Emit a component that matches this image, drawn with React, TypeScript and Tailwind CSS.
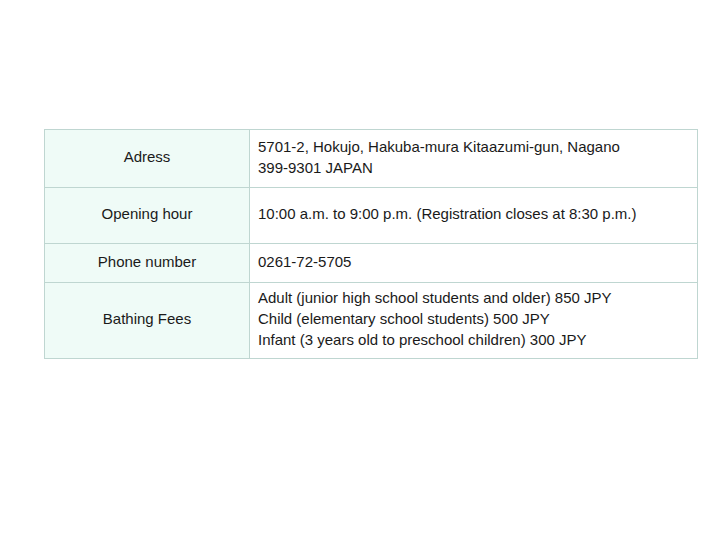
const rows = [
  {
    label: 'Adress',
    lines: ['5701-2, Hokujo, Hakuba-mura Kitaazumi-gun, Nagano', '399-9301 JAPAN'],
    h: 'h-[58px]',
  },
  {
    label: 'Opening hour',
    lines: ['10:00 a.m. to 9:00 p.m. (Registration closes at 8:30 p.m.)'],
    h: 'h-[56px]',
  },
  { label: 'Phone number', lines: ['0261-72-5705'], h: 'h-[39px]' },
  {
    label: 'Bathing Fees',
    lines: [
      'Adult (junior high school students and older) 850 JPY',
      'Child (elementary school students) 500 JPY',
      'Infant (3 years old to preschool children) 300 JPY',
    ],
    h: 'h-[76px]',
  },
];

export default function App() {
  return (
    <div className="w-[720px] h-[540px] bg-white font-['Liberation_Sans',Arial,sans-serif] text-[15px] leading-[21px] text-[#1a1a1a]">
      <div className="pt-[129px] pl-[44px]">
        <table className="w-[654px] border-collapse">
          <tbody>
            {rows.map((r) => (
              <tr key={r.label} className={r.h}>
                <td className="w-[205px] border border-[#bfd6d1] bg-[#effbf7] pb-[4px] text-center align-middle">
                  {r.label}
                </td>
                <td className="border border-[#bfd6d1] px-[8px] pb-[4px] align-middle">
                  {r.lines.map((l) => (
                    <div key={l}>{l}</div>
                  ))}
                </td>
              </tr>
            ))}
          </tbody>
        </table>
      </div>
    </div>
  );
}
